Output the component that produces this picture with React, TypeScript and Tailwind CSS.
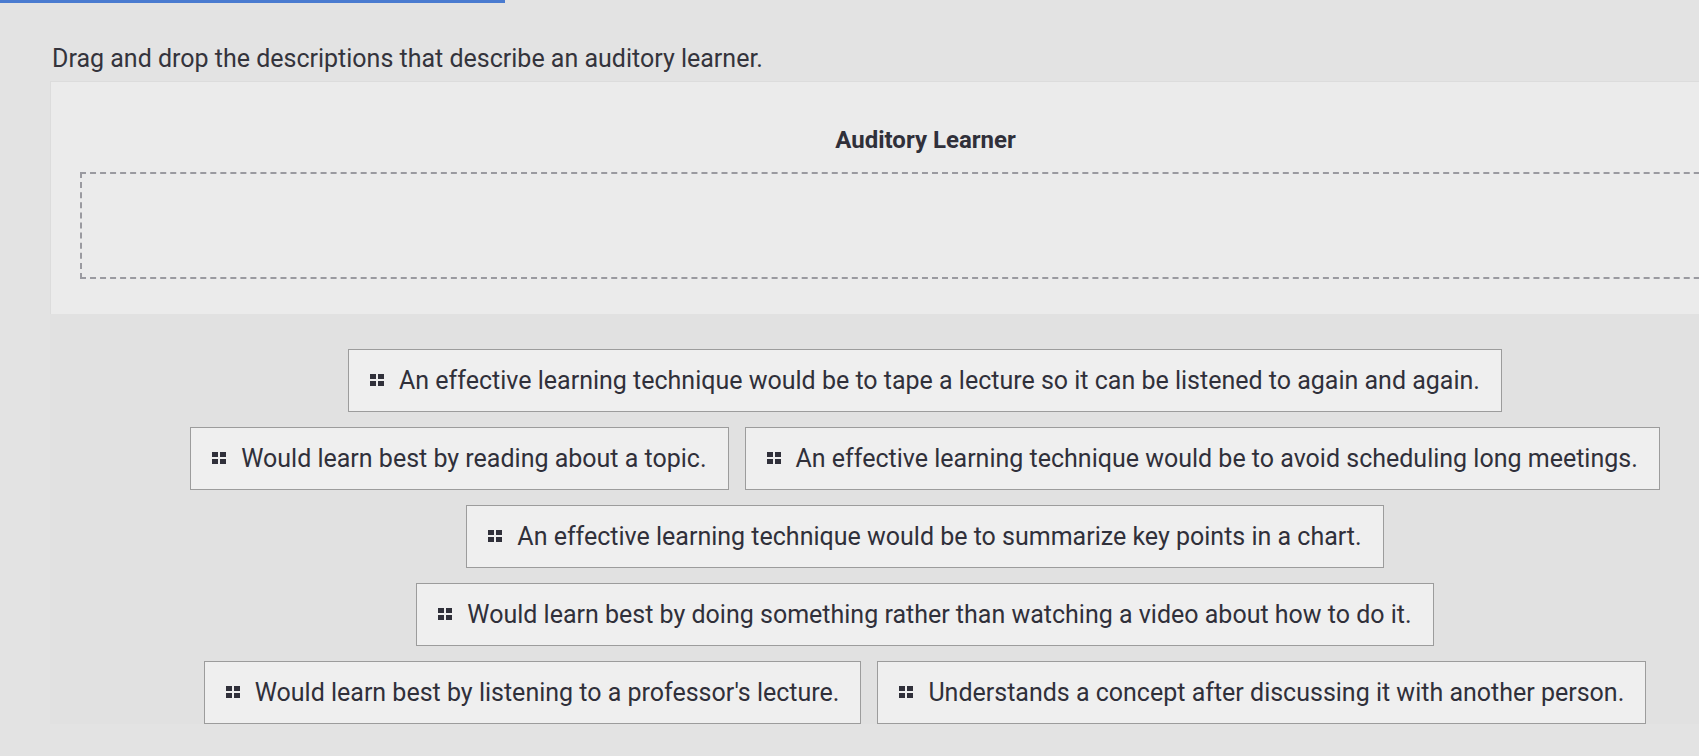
import React from "react";

const Grip = () => (
  <svg width="15" height="13" viewBox="0 0 15 13" className="shrink-0 mr-[14px]">
    {[0, 8].map((x) => [0, 7].map((y) => <rect key={x + "-" + y} x={x} y={y} width="6" height="5" fill="#30303a" />))}
  </svg>
);

const Item = ({ t }: { t: string }) => (
  <div className="flex items-center h-[63px] px-[21px] border border-[#9c9c9c] bg-[#efefef] text-[25px] text-[#30303a] whitespace-nowrap">
    <Grip />
    {t}
  </div>
);

export default function App() {
  return (
    <div className="w-[1699px] h-[756px] overflow-hidden bg-[#e3e3e3] relative" style={{ fontFamily: "Roboto, 'Liberation Sans', sans-serif" }}>
      <div className="absolute left-0 top-0 w-[505px] h-[3px] bg-[#4a7bd0]" />
      <div className="pl-[52px] pt-[40px] text-[25px] text-[#34343c] h-[81px]">Drag and drop the descriptions that describe an auditory learner.</div>
      <div className="ml-[50px] w-[1750px]">
        <div className="bg-[#ebebeb] h-[233px] pt-[44px] border-t border-l border-[#dcdcdc]">
          <div className="text-center text-[24px] font-bold text-[#30303a] leading-[28px]">Auditory Learner</div>
          <div className="ml-[29px] mt-[18px] h-[107px] border-2 border-dashed border-[#9a9aa0]" />
        </div>
        <div className="bg-[#e1e1e1] pt-[35px] flex flex-col items-center gap-[15px]">
          <div className="flex gap-[16px]"><Item t="An effective learning technique would be to tape a lecture so it can be listened to again and again." /></div>
          <div className="flex gap-[16px]">
            <Item t="Would learn best by reading about a topic." />
            <Item t="An effective learning technique would be to avoid scheduling long meetings." />
          </div>
          <div className="flex gap-[16px]"><Item t="An effective learning technique would be to summarize key points in a chart." /></div>
          <div className="flex gap-[16px]"><Item t="Would learn best by doing something rather than watching a video about how to do it." /></div>
          <div className="flex gap-[16px]">
            <Item t="Would learn best by listening to a professor's lecture." />
            <Item t="Understands a concept after discussing it with another person." />
          </div>
        </div>
      </div>
    </div>
  );
}
